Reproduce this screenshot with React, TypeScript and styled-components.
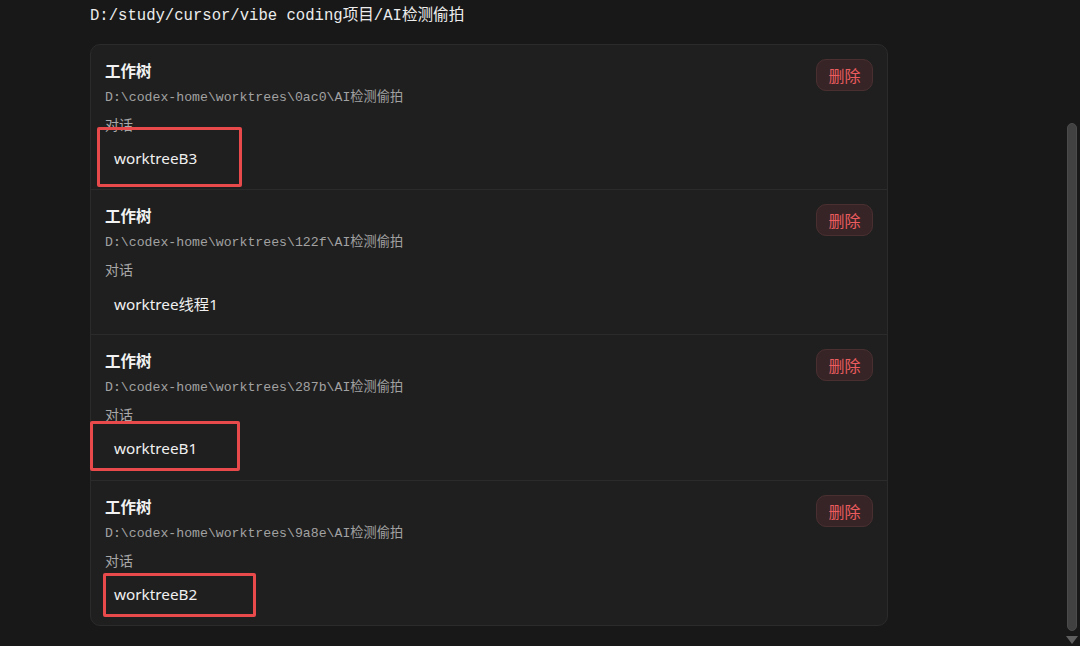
import React from "react";
import styled, { createGlobalStyle } from "styled-components";

const GlobalStyle = createGlobalStyle`
  html, body { margin: 0; padding: 0; background: #181818; }
  body { font-family: "Noto Sans", "Noto Sans CJK SC", sans-serif; }
  * { box-sizing: border-box; }
`;

const Page = styled.div`
  display: flex;
  width: 100%;
  height: 100vh;
  overflow: hidden;
  background: #181818;
`;

const Main = styled.main`
  flex: 1;
  display: flex;
  flex-direction: column;
  padding: 6px 0 0 90px;
`;

const ProjectPath = styled.div`
  font-family: "Liberation Mono", "Noto Sans CJK SC", monospace;
  font-size: 15.6px;
  line-height: 20px;
  color: #ececec;
  height: 20px;
  margin-bottom: 18px;
`;

const Card = styled.section`
  width: 798px;
  background: #1f1f1f;
  border: 1px solid #2b2b2b;
  border-radius: 10px;
  display: flex;
  flex-direction: column;
`;

const Row = styled.div`
  display: flex;
  align-items: flex-start;
  justify-content: space-between;
  padding: 14px 14px 16.2px 14px;
  & + & {
    border-top: 1px solid #2b2b2b;
  }
`;

const Info = styled.div`
  display: flex;
  flex-direction: column;
  align-items: flex-start;
`;

const Title = styled.div`
  font-family: "Noto Sans CJK SC", sans-serif;
  font-weight: 700;
  font-size: 15.5px;
  line-height: 22px;
  color: #f2f2f2;
`;

const Path = styled.div`
  margin-top: 8px;
  font-family: "Liberation Mono", "Noto Sans CJK SC", monospace;
  font-size: 13.2px;
  line-height: 18px;
  color: #a2a2a2;
`;

const Label = styled.div`
  margin-top: 7px;
  font-family: "Noto Sans CJK SC", sans-serif;
  font-size: 14px;
  line-height: 20px;
  color: #a8a8a8;
`;

const Thread = styled.div`
  position: relative;
  margin-top: 9px;
  height: 30px;
  display: inline-flex;
  align-items: center;
  padding: 0 9px;
  font-family: "Noto Sans", "Noto Sans CJK SC", sans-serif;
  font-size: 15.3px;
  color: #f0f0f0;
  border-radius: 6px;
`;

const Highlight = styled.span<{ $l: number; $t: number; $w: number; $h: number }>`
  position: absolute;
  left: ${(p) => p.$l}px;
  top: ${(p) => p.$t}px;
  width: ${(p) => p.$w}px;
  height: ${(p) => p.$h}px;
  border: 3px solid #e84a4c;
  border-radius: 2px;
  pointer-events: none;
`;

const DeleteButton = styled.button`
  margin-top: 0;
  width: 57px;
  height: 32px;
  border-radius: 10px;
  background: #372426;
  border: 1px solid #4a2f31;
  color: #ea5c5e;
  font-family: "Noto Sans CJK SC", sans-serif;
  font-size: 16px;
  padding: 0;
  cursor: pointer;
`;

const ScrollRail = styled.div`
  width: 16px;
  display: flex;
  flex-direction: column;
  align-items: center;
  padding-top: 123px;
`;

const Thumb = styled.div`
  width: 10px;
  height: 508px;
  border-radius: 5px;
  background: #414141;
  border: 1px solid #4b4b4b;
`;

const DownArrow = styled.div`
  margin-top: 5px;
  width: 0;
  height: 0;
  border-left: 6px solid transparent;
  border-right: 6px solid transparent;
  border-top: 8px solid #5e5e5e;
`;

type Box = { l: number; t: number; w: number; h: number };
type Item = { path: string; thread: string; box?: Box };

const items: Item[] = [
  { path: "D:\\codex-home\\worktrees\\0ac0\\AI检测偷拍", thread: "worktreeB3", box: { l: -8, t: -16, w: 145, h: 60 } },
  { path: "D:\\codex-home\\worktrees\\122f\\AI检测偷拍", thread: "worktree线程1" },
  { path: "D:\\codex-home\\worktrees\\287b\\AI检测偷拍", thread: "worktreeB1", box: { l: -15, t: -12, w: 150, h: 50 } },
  { path: "D:\\codex-home\\worktrees\\9a8e\\AI检测偷拍", thread: "worktreeB2", box: { l: -2, t: -6, w: 153, h: 44 } },
];

export default function App() {
  return (
    <>
      <GlobalStyle />
      <Page>
        <Main>
          <ProjectPath>D:/study/cursor/vibe coding项目/AI检测偷拍</ProjectPath>
          <Card>
            {items.map((it) => (
              <Row key={it.path}>
                <Info>
                  <Title>工作树</Title>
                  <Path>{it.path}</Path>
                  <Label>对话</Label>
                  <Thread>
                    {it.thread}
                    {it.box && <Highlight $l={it.box.l} $t={it.box.t} $w={it.box.w} $h={it.box.h} />}
                  </Thread>
                </Info>
                <DeleteButton>删除</DeleteButton>
              </Row>
            ))}
          </Card>
        </Main>
        <ScrollRail>
          <Thumb />
          <DownArrow />
        </ScrollRail>
      </Page>
    </>
  );
}
